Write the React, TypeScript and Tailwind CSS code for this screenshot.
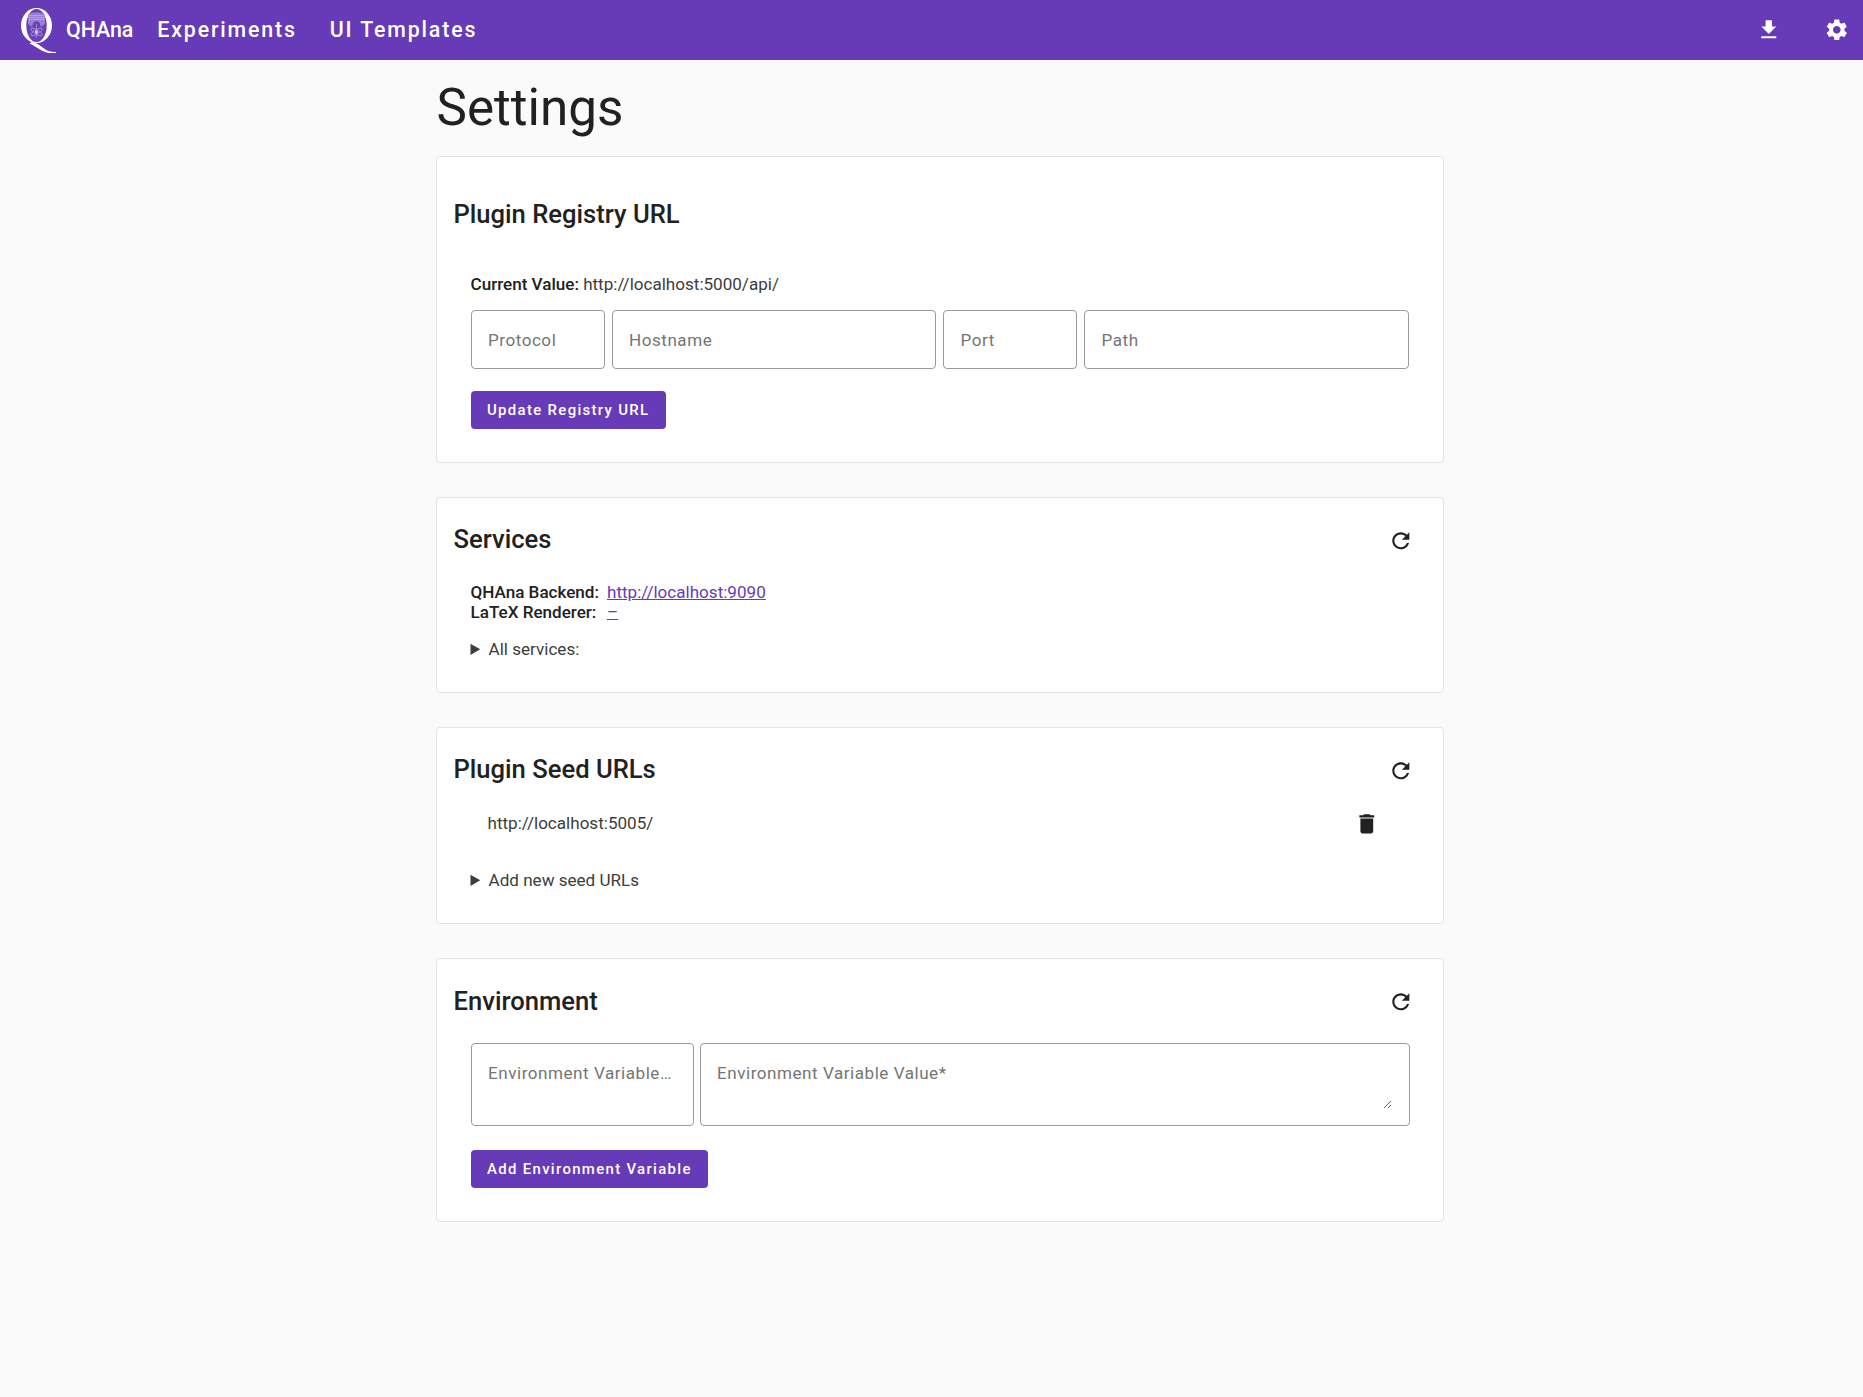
import React from "react";

const font = { fontFamily: "Roboto, sans-serif" };

function Refresh() {
  return (
    <svg viewBox="0 0 24 24" className="w-[25.6px] h-[25.6px] fill-[#212121] shrink-0" aria-hidden="true">
      <path d="M17.65 6.35C16.2 4.9 14.21 4 12 4c-4.42 0-7.99 3.58-7.99 8s3.57 8 7.99 8c3.73 0 6.84-2.55 7.73-6h-2.08c-.82 2.33-3.04 4-5.65 4-3.31 0-6-2.69-6-6s2.69-6 6-6c1.66 0 3.14.69 4.22 1.78L13 11h7V4l-2.35 2.35z" />
    </svg>
  );
}

function Logo() {
  return (
    <svg viewBox="0 0 35 46" className="w-[35px] h-[46px] shrink-0" aria-hidden="true">
      <ellipse cx="15.5" cy="18.5" rx="15.5" ry="17.5" fill="#fff" />
      <path d="M11 35C16 36 18.500 38 23 41.500C27 44.500 31 45.300 35 45L35 46C29 47 24 45.500 19 42.500C15 40 12 38.200 8.500 36.500z" fill="#fff" />
      <ellipse cx="15.5" cy="18.5" rx="10.2" ry="16.6" fill="#6a3fb9" />
      <path d="M7 7.500L12 5.500h7L24 7.500V17l-4 3-1.500-4.500-3-1.500-3 1.500L11 20l-4-3z" fill="#9b7fd2" />
      <g fill="none" stroke="#c6b5e6" strokeWidth="0.6">
        <path d="M7.500 8.500h16M7.500 10.500h16M7.500 12.500h16" />
        <ellipse cx="15.5" cy="25" rx="6.500" ry="2.200" transform="rotate(30 15.5 25)" />
        <ellipse cx="15.5" cy="25" rx="6.500" ry="2.200" transform="rotate(-30 15.5 25)" />
        <path d="M15.500 17v14" />
      </g>
      <circle cx="15.5" cy="25" r="1.500" fill="#e6dcf5" />
    </svg>
  );
}

function Card({
  title,
  titleTop,
  refresh,
  children,
}: {
  title: string;
  titleTop: string;
  refresh?: boolean;
  children: React.ReactNode;
}) {
  return (
    <section className="border border-[#e3e3e3] rounded-[4px] bg-white px-4">
      <div className="flex items-start justify-between">
        <h2 className={`ml-px text-[25.6px] leading-8 font-medium text-[#212121] ${titleTop}`}>{title}</h2>
        {refresh && (
          <div className="mt-[30px] mr-[13px]">
            <Refresh />
          </div>
        )}
      </div>
      {children}
    </section>
  );
}

function TextField({ label, className }: { label: string; className: string }) {
  return (
    <input
      placeholder={label}
      className={`h-[59px] border border-[#9a9a9a] rounded-[4px] px-[16.5px] bg-white text-[17.07px] tracking-[0.53px] placeholder:text-[#757575] min-w-0 truncate ${className}`}
    />
  );
}

function Details({ label }: { label: string }) {
  return (
    <details className="text-[17.07px] leading-6 text-[#3d3d3d]">
      <summary>{label}</summary>
    </details>
  );
}

function PrimaryButton({ children }: { children: React.ReactNode }) {
  return (
    <button className="h-[38px] rounded-[4px] bg-[#673ab7] text-white px-[16.5px] text-[14.93px] font-medium tracking-[1.33px] block">
      {children}
    </button>
  );
}

export default function App() {
  return (
    <div style={font} className="min-h-[1397px] bg-[#fafafa]">
      <header className="h-[60px] bg-[#673ab7] text-white flex items-center">
        <div className="ml-[21px]">
          <Logo />
        </div>
        <span className="ml-[10px] text-[21.33px] font-medium">QHAna</span>
        <span className="ml-[24px] text-[21.33px] font-medium tracking-[1.85px]">Experiments</span>
        <span className="ml-[33px] text-[21.33px] font-medium tracking-[1.85px]">UI Templates</span>
        <div className="ml-auto flex items-center mr-[13px] gap-[42.4px]">
          <svg viewBox="0 0 24 24" className="w-[25.6px] h-[25.6px] fill-white" aria-hidden="true">
            <path d="M19 9h-4V3H9v6H5l7 7 7-7zM5 18v2h14v-2H5z" />
          </svg>
          <svg viewBox="0 0 24 24" className="w-[25.6px] h-[25.6px] fill-white" aria-hidden="true">
            <path d="M19.14 12.94c.04-.3.06-.61.06-.94 0-.32-.02-.64-.07-.94l2.03-1.58c.18-.14.23-.41.12-.61l-1.92-3.32c-.12-.22-.37-.29-.59-.22l-2.39.96c-.5-.38-1.030-.7-1.620-.94l-.36-2.540c-.04-.24-.24-.41-.48-.41h-3.840c-.24 0-.43.17-.47.41l-.36 2.540c-.59.24-1.130.57-1.620.94l-2.390-.96c-.22-.08-.47 0-.59.22L2.740 8.870c-.12.21-.08.47.12.61l2.030 1.580c-.05.3-.09.63-.09.94s.02.64.07.94l-2.030 1.580c-.18.14-.23.41-.12.61l1.920 3.320c.12.22.37.29.59.22l2.390-.96c.5.38 1.030.7 1.620.94l.36 2.540c.05.24.24.41.48.41h3.840c.24 0 .44-.17.47-.41l.36-2.540c.59-.24 1.130-.56 1.620-.94l2.390.96c.22.08.47 0 .59-.22l1.920-3.320c.12-.22.07-.47-.12-.61l-2.010-1.580zM12 15.600c-1.980 0-3.600-1.620-3.600-3.600s1.620-3.600 3.600-3.600 3.600 1.620 3.600 3.600-1.620 3.600-3.600 3.600z" />
          </svg>
        </div>
      </header>

      <main className="w-[1024px] mx-auto pl-4">
        <h1 className="ml-px text-[51.2px] leading-[56px] font-normal text-[#212121] pt-[20px] pb-[20px]">Settings</h1>

        <div className="flex flex-col gap-[34px]">
          <Card title="Plugin Registry URL" titleTop="pt-[41px]">
            <div className="mx-[18px] pt-[44px] pb-[33px]">
              <p className="text-[17.07px] leading-5 text-[#3d3d3d]">
                <span className="font-medium text-[#212121]">Current Value:</span> http://localhost:5000/api/
              </p>
              <div className="mt-[16px] flex gap-[7px]">
                <TextField label="Protocol" className="w-[134px]" />
                <TextField label="Hostname" className="flex-1" />
                <TextField label="Port" className="w-[134px]" />
                <TextField label="Path" className="flex-1" />
              </div>
              <div className="mt-[22px]">
                <PrimaryButton>Update Registry URL</PrimaryButton>
              </div>
            </div>
          </Card>

          <Card title="Services" titleTop="pt-[25px]" refresh>
            <div className="mx-[18px] pt-[27px] pb-[31px]">
              <div className="grid grid-cols-[auto_1fr] gap-x-2 text-[17.07px] leading-5">
                <span className="font-medium text-[#212121]">QHAna Backend:</span>
                <a className="text-[#673ab7] underline" href="#">http://localhost:9090</a>
                <span className="font-medium text-[#212121]">LaTeX Renderer:</span>
                <a className="text-[#673ab7] underline" href="#">–</a>
              </div>
              <div className="mt-[15px]">
                <Details label="All services:" />
              </div>
            </div>
          </Card>

          <Card title="Plugin Seed URLs" titleTop="pt-[25px]" refresh>
            <div className="mx-[18px] pb-[31px]">
              <div className="flex items-center justify-between h-12 mt-[15px] pl-[17px] pr-[29px] text-[17.07px] text-[#3d3d3d]">
                <span>http://localhost:5005/</span>
                <svg viewBox="0 0 24 24" className="w-[25.6px] h-[25.6px] fill-[#212121]" aria-hidden="true">
                  <path d="M6 19c0 1.100.9 2 2 2h8c1.100 0 2-.9 2-2V7H6v12zM19 4h-3.500l-1-1h-5l-1 1H5v2h14V4z" />
                </svg>
              </div>
              <div className="mt-[20px]">
                <Details label="Add new seed URLs" />
              </div>
            </div>
          </Card>

          <Card title="Environment" titleTop="pt-[26px]" refresh>
            <div className="mx-[18px] pt-[26px] pb-[33px]">
              <div className="flex gap-[6px] -mr-px">
                <input
                  placeholder="Environment Variable Name*"
                  className="w-[223px] h-[83px] border border-[#9a9a9a] rounded-[4px] px-[16.5px] pb-[23px] bg-white text-[17.07px] tracking-[0.53px] placeholder:text-[#757575] truncate"
                />
                <div className="flex-1 h-[83px] border border-[#9a9a9a] rounded-[4px] px-[16.5px] pt-[17px] pb-4 bg-white">
                  <textarea
                    placeholder="Environment Variable Value*"
                    className="block w-full h-12 text-[17.07px] leading-6 tracking-[0.53px] placeholder:text-[#757575] outline-none"
                  />
                </div>
              </div>
              <div className="mt-[24px]">
                <PrimaryButton>Add Environment Variable</PrimaryButton>
              </div>
            </div>
          </Card>
        </div>
      </main>
    </div>
  );
}
